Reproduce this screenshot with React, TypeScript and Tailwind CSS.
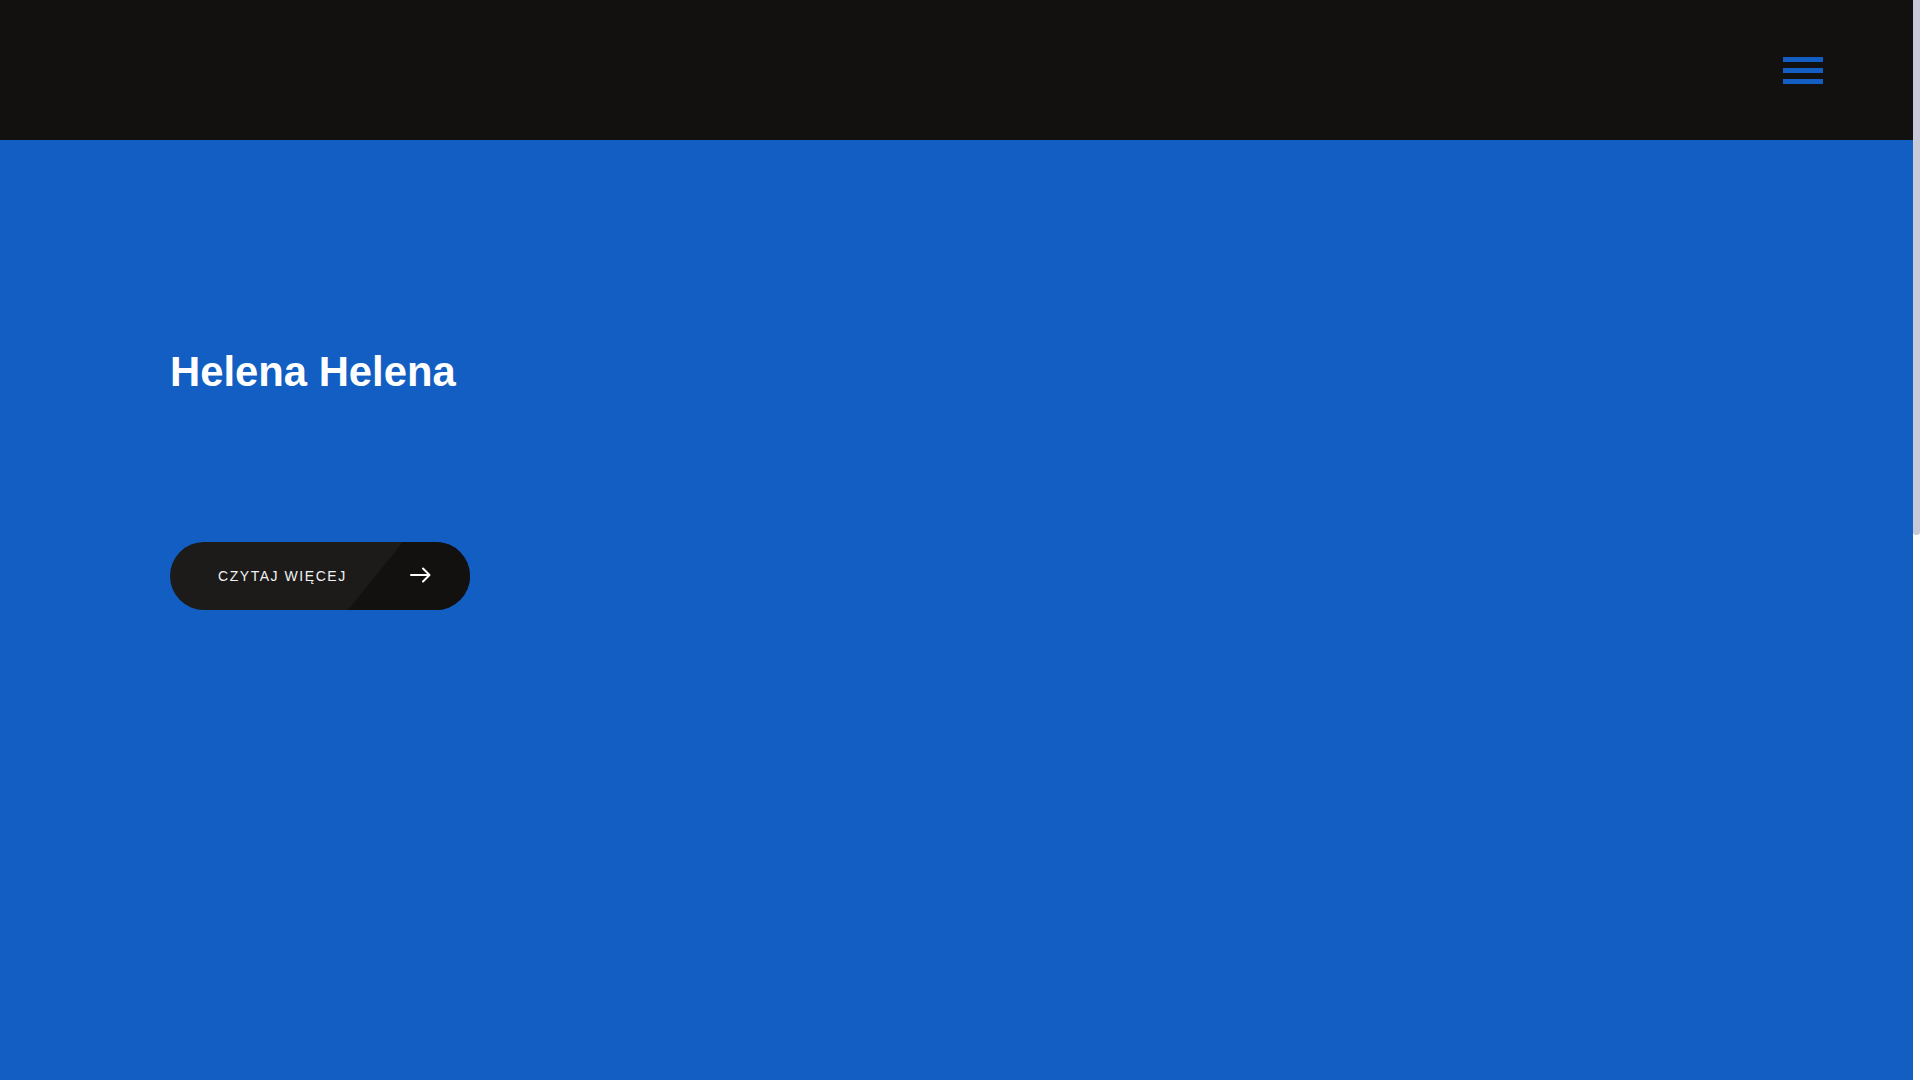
import React from 'react';

function MenuIcon() {
  return (
    <button className="flex flex-col gap-[6px] w-[40px]" aria-label="Menu">
      <span className="block h-[5px] w-full bg-[#125ec3]"></span>
      <span className="block h-[5px] w-full bg-[#125ec3]"></span>
      <span className="block h-[5px] w-full bg-[#125ec3]"></span>
    </button>
  );
}

function ArrowIcon() {
  return (
    <svg width="21" height="16" viewBox="0 0 21 16" fill="none" stroke="white" strokeWidth="2" strokeLinecap="round" strokeLinejoin="round">
      <path d="M1 8h18" />
      <path d="M13 1.5 19.5 8 13 14.5" />
    </svg>
  );
}

function ReadMoreButton() {
  return (
    <a
      href="#"
      className="relative flex items-center w-[300px] h-[68px] rounded-full overflow-hidden bg-[#1c1b1a]"
    >
      <span
        className="absolute inset-0 bg-[#121110]"
        style={{ clipPath: 'polygon(233px 0, 100% 0, 100% 100%, 178px 100%)' }}
      ></span>
      <span className="relative pl-[48px] text-[14px] tracking-[1.55px] text-[#f2f2f2] font-['Liberation_Sans',Arial,sans-serif]">
        CZYTAJ WIĘCEJ
      </span>
      <span className="absolute left-[240px] top-[25px]">
        <ArrowIcon />
      </span>
    </a>
  );
}

export default function App() {
  return (
    <div className="flex h-screen overflow-hidden bg-white font-['Liberation_Sans',Arial,sans-serif]">
      <div className="flex-1 flex flex-col">
        <header className="h-[140px] shrink-0 bg-[#121110] flex items-center justify-end pr-[90px]">
          <MenuIcon />
        </header>
        <main className="flex-1 bg-[#125ec3] pl-[170px] pt-[208px]">
          <h1 className="text-[41.8px] leading-[48px] font-bold text-white">Helena Helena</h1>
          <div className="mt-[146px]">
            <ReadMoreButton />
          </div>
        </main>
      </div>
      <aside className="w-[7px] bg-white">
        <div className="h-[535px] bg-[#c8cad8] rounded-b-[3px]"></div>
      </aside>
    </div>
  );
}
